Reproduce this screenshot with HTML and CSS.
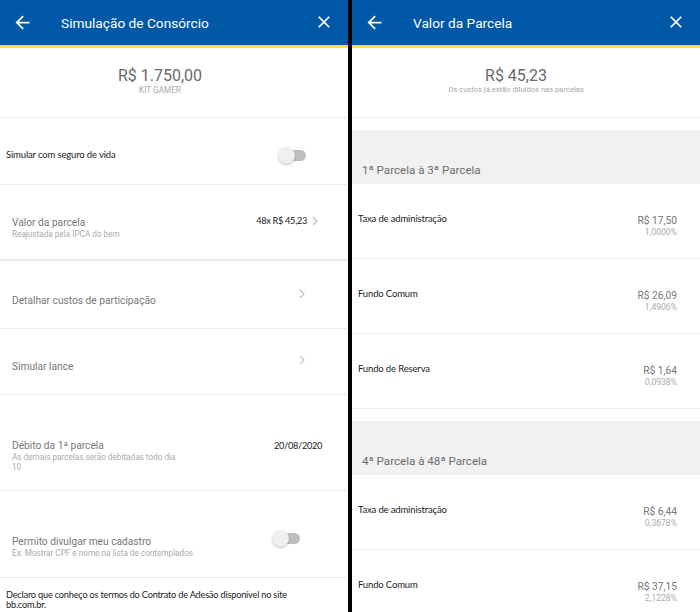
FILE: index.html
```html
<!DOCTYPE html>
<html lang="pt-BR">
<head>
<meta charset="utf-8">
<title>Simulação de Consórcio</title>
<link rel="stylesheet" href="styles.css">
</head>
<body>
<div class="screen">
  <section class="panel panel--left">
    <header class="appbar">
      <svg class="appbar__back" viewBox="0 0 24 24" width="21" height="21"><path d="M20 11H7.83l5.59-5.59L12 4l-8 8 8 8 1.41-1.41L7.83 13H20v-2z" fill="#fff"/></svg>
      <h1 class="appbar__title">Simulação de Consórcio</h1>
      <svg class="appbar__close" viewBox="0 0 24 24" width="20" height="20"><path d="M19 6.41L17.59 5 12 10.59 6.41 5 5 6.41 10.59 12 5 17.59 6.41 19 12 13.41 17.59 19 19 17.59 13.41 12z" fill="#fff"/></svg>
    </header>
    <div class="summary">
      <div class="summary__amount">R$ 1.750,00</div>
      <div class="summary__label summary__label--caps">KIT GAMER</div>
    </div>

    <div class="row row--seguro">
      <span class="row__dark">Simular com seguro de vida</span>
      <span class="switch"><span class="switch__track"></span><span class="switch__knob"></span></span>
    </div>

    <div class="row row--valor">
      <div class="row__text">
        <div class="row__title">Valor da parcela</div>
        <div class="row__sub">Reajustada pela IPCA do bem</div>
      </div>
      <div class="row__value">
        <span class="row__dark row__num">48x R$ 45,23</span>
        <svg class="chevron" viewBox="0 0 6 10" width="6" height="10"><polyline points="1,1 5,5 1,9" fill="none" stroke="#bdbdbd" stroke-width="1.1"/></svg>
      </div>
    </div>

    <div class="row row--detalhar">
      <div class="row__title">Detalhar custos de participação</div>
      <svg class="chevron chevron--up" viewBox="0 0 6 10" width="6" height="10"><polyline points="1,1 5,5 1,9" fill="none" stroke="#bdbdbd" stroke-width="1.1"/></svg>
    </div>

    <div class="row row--lance">
      <div class="row__title">Simular lance</div>
      <svg class="chevron chevron--up" viewBox="0 0 6 10" width="6" height="10"><polyline points="1,1 5,5 1,9" fill="none" stroke="#bdbdbd" stroke-width="1.1"/></svg>
    </div>

    <div class="row row--debito">
      <div class="row__text">
        <div class="row__title">Débito da 1ª parcela</div>
        <div class="row__sub row__sub--wrap">As demais parcelas serão debitadas todo dia 10</div>
      </div>
      <span class="row__dark row__num row__date">20/08/2020</span>
    </div>

    <div class="row row--permito">
      <div class="row__text">
        <div class="row__title">Permito divulgar meu cadastro</div>
        <div class="row__sub">Ex: Mostrar CPF e nome na lista de contemplados</div>
      </div>
      <span class="switch switch--permito"><span class="switch__track"></span><span class="switch__knob"></span></span>
    </div>

    <div class="declaro">Declaro que conheço os termos do Contrato de Adesão disponível no site bb.com.br.</div>
  </section>

  <section class="panel panel--right">
    <header class="appbar">
      <svg class="appbar__back" viewBox="0 0 24 24" width="21" height="21"><path d="M20 11H7.83l5.59-5.59L12 4l-8 8 8 8 1.41-1.41L7.83 13H20v-2z" fill="#fff"/></svg>
      <h1 class="appbar__title">Valor da Parcela</h1>
      <svg class="appbar__close" viewBox="0 0 24 24" width="20" height="20"><path d="M19 6.41L17.59 5 12 10.59 6.41 5 5 6.41 10.59 12 5 17.59 6.41 19 12 13.41 17.59 19 19 17.59 13.41 12z" fill="#fff"/></svg>
    </header>
    <div class="summary summary--right">
      <div class="summary__amount">R$ 45,23</div>
      <div class="summary__label">Os custos já estão diluídos nas parcelas</div>
    </div>

    <div class="group">1ª Parcela à 3ª Parcela</div>
    <div class="cost">
      <span class="cost__label">Taxa de administração</span>
      <div class="cost__value"><div class="cost__amount">R$ 17,50</div><div class="cost__pct">1,0000%</div></div>
    </div>
    <div class="cost">
      <span class="cost__label">Fundo Comum</span>
      <div class="cost__value"><div class="cost__amount">R$ 26,09</div><div class="cost__pct">1,4906%</div></div>
    </div>
    <div class="cost">
      <span class="cost__label">Fundo de Reserva</span>
      <div class="cost__value"><div class="cost__amount">R$ 1,64</div><div class="cost__pct">0,0938%</div></div>
    </div>

    <div class="group">4ª Parcela à 48ª Parcela</div>
    <div class="cost">
      <span class="cost__label">Taxa de administração</span>
      <div class="cost__value"><div class="cost__amount">R$ 6,44</div><div class="cost__pct">0,3678%</div></div>
    </div>
    <div class="cost">
      <span class="cost__label">Fundo Comum</span>
      <div class="cost__value"><div class="cost__amount">R$ 37,15</div><div class="cost__pct">2,1228%</div></div>
    </div>
  </section>
</div>
</body>
</html>
```

FILE: styles.css
```css
* { box-sizing: border-box; }
html, body { margin: 0; padding: 0; }
body {
  width: 700px;
  height: 612px;
  overflow: hidden;
  background: #fff;
  font-family: Roboto, "Noto Sans", sans-serif;
}
.screen {
  display: flex;
  width: 700px;
  height: 612px;
  overflow: hidden;
}
.panel {
  display: flex;
  flex-direction: column;
  background: #fff;
  overflow: hidden;
}
.panel--left {
  width: 352px;
  border-right: 4px solid #000;
  flex: none;
}
.panel--right {
  flex: 1;
}

/* App bar */
.appbar {
  flex: none;
  height: 48px;
  background: #0058a6;
  border-bottom: 3px solid #fbea10;
  display: flex;
  align-items: center;
  padding: 0 14px 1px 12px;
}
.appbar__back { flex: none; display: block; }
.appbar__title {
  margin: 0 0 0 28px;
  flex: 1;
  font-size: 13.7px;
  font-weight: 400;
  color: #fff;
  line-height: 20px;
  padding-top: 1px;
}
.appbar__close { flex: none; display: block; }

/* Summary */
.summary {
  flex: none;
  height: 70px;
  border-bottom: 1px solid #ebebeb;
  padding: 18px 28px 0 0;
  text-align: center;
}
.summary--right { padding-right: 20px; }
.summary__amount {
  font-size: 16px;
  line-height: 20px;
  color: #6a6a6a;
  margin-bottom: -1px;
}
.summary__label {
  font-size: 7.6px;
  line-height: 10px;
  color: #a8a8a8;
}
.summary__label--caps { font-size: 8.2px; }

/* Left rows */
.row {
  flex: none;
  display: flex;
  justify-content: space-between;
  align-items: flex-start;
  border-bottom: 1px solid #ebebeb;
  padding: 0 12px;
}
.row__dark {
  font-family: Lato, "Noto Sans", sans-serif;
  font-size: 9.5px;
  letter-spacing: -0.15px;
  line-height: 12px;
  color: #222;
}
.row__num {
  font-size: 9.2px;
  letter-spacing: -0.3px;
}
.row__title {
  font-size: 10.2px;
  line-height: 12px;
  color: #777;
}
.row__sub {
  font-size: 8.2px;
  line-height: 10px;
  color: #ababab;
}
.row__sub--wrap { width: 172px; }

.row--seguro {
  height: 67px;
  padding: 8px 42px 0 6px;
  align-items: center;
}
.switch {
  position: relative;
  display: block;
  width: 28px;
  height: 17px;
}
.switch__track {
  position: absolute;
  right: 0;
  top: 3px;
  width: 22px;
  height: 11px;
  border-radius: 6px;
  background: #bdbdbd;
}
.switch__knob {
  position: absolute;
  left: 0;
  top: 0;
  width: 17px;
  height: 17px;
  border-radius: 50%;
  background: #efefef;
  box-shadow: 0 1px 2px rgba(0,0,0,0.25);
}

.row--valor {
  height: 76px;
  border-bottom-width: 2px;
  padding: 32px 30px 0 12px;
}
.row--valor .row__value {
  display: flex;
  align-items: center;
  gap: 5px;
  margin-top: -2px;
}
.chevron { display: block; flex: none; }

.row--detalhar {
  height: 68px;
  padding: 34px 43px 0 12px;
}
.row--lance {
  height: 66px;
  padding: 32px 43px 0 12px;
}
.chevron--up { margin-top: -6px; }

.row--debito {
  height: 96px;
  padding: 45px 26px 0 12px;
}
.row__date { margin-top: 0; }

.row--permito {
  height: 87px;
  padding: 45px 48px 0 12px;
}
.switch--permito { margin-top: -6px; }

.declaro {
  padding: 12px 30px 0 6px;
  font-family: Lato, "Noto Sans", sans-serif;
  font-size: 9.2px;
  letter-spacing: -0.2px;
  line-height: 10px;
  color: #222;
}

/* Right panel */
.group {
  flex: none;
  margin-top: 12px;
  height: 54px;
  background: #f1f1f1;
  padding: 33px 0 0 10px;
  font-size: 11.6px;
  line-height: 14px;
  color: #6d6d6d;
}
.cost {
  flex: none;
  height: 75px;
  display: flex;
  justify-content: space-between;
  align-items: flex-start;
  border-bottom: 1px solid #ebebeb;
  padding: 29px 23px 0 6px;
}
.cost__label {
  font-family: Lato, "Noto Sans", sans-serif;
  font-size: 9.5px;
  letter-spacing: -0.15px;
  line-height: 12px;
  color: #222;
}
.cost__value {
  text-align: right;
  margin-top: 1px;
}
.cost__amount {
  font-size: 10.2px;
  line-height: 14px;
  color: #777;
}
.cost__pct {
  font-size: 8.6px;
  line-height: 9px;
  color: #ababab;
}
```
